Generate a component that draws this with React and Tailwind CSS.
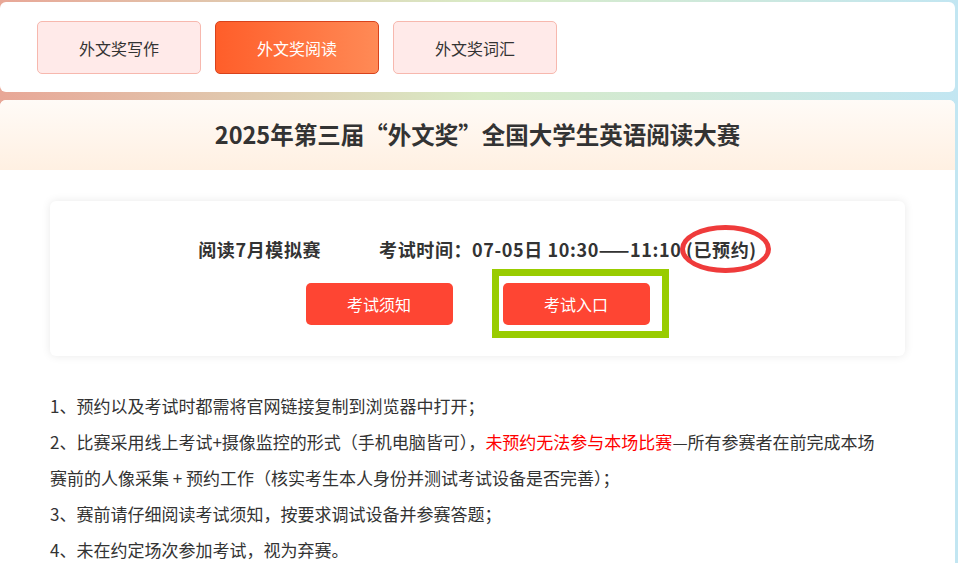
import React from "react";

const font = { fontFamily: '"Noto Sans CJK SC", "Noto Sans", sans-serif' };

function Tab({ children, active }) {
  if (active) {
    return (
      <div className="flex h-[53px] w-[164px] items-center justify-center rounded-[5px] border border-[#d8421c] bg-[linear-gradient(90deg,#ff5e2a_0%,#ff8a56_100%)] text-[16px] text-white">
        {children}
      </div>
    );
  }
  return (
    <div className="flex h-[53px] w-[164px] items-center justify-center rounded-[5px] border border-[#f7b8ae] bg-[#ffeae9] text-[16px] text-[#333]">
      {children}
    </div>
  );
}

export default function App() {
  return (
    <div
      style={font}
      className="min-h-[563px] w-[958px] overflow-hidden bg-[linear-gradient(90deg,#e8a797_0%,#d9ebc6_50%,#c2e6f2_100%)] pt-[2px] pr-[3px]"
    >
      {/* top tabs card */}
      <div className="flex h-[90px] gap-[14px] rounded-[6px] bg-white px-[37px] pt-[19px]">
        <Tab>外文奖写作</Tab>
        <Tab active>外文奖阅读</Tab>
        <Tab>外文奖词汇</Tab>
      </div>

      {/* main card */}
      <div className="mt-[8px] min-h-[463px] rounded-t-[6px] bg-white">
        <div className="flex h-[70px] items-center justify-center rounded-t-[6px] bg-[linear-gradient(180deg,#fffbf7_0%,#fff0e2_100%)]">
          <h1 className="text-[23.5px] font-bold text-[#333]">
            2025年第三届“外文奖”全国大学生英语阅读大赛
          </h1>
        </div>

        <div className="mx-[50px] mt-[31px] h-[155px] rounded-[6px] bg-white pt-[35px] shadow-[0_0_10px_rgba(0,0,0,0.09)]">
          <div className="flex justify-center gap-[58px] text-[18px] leading-[27px] font-bold tracking-[0.6px] text-[#333]">
            <span>阅读7月模拟赛</span>
            <span>
              考试时间：07-05日 10:30——11:10{" "}
              <span className="relative">
                (已预约)
                <span className="absolute -left-[6px] -right-[14px] -top-[11px] -bottom-[11px] rounded-[50%] border-[5px] border-[#ef3b3b]"></span>
              </span>
            </span>
          </div>
          <div className="mt-[20px] flex justify-center gap-[50px]">
            <button className="flex h-[42px] w-[147px] items-center justify-center rounded-[5px] bg-[#fe4533] text-[16px] text-white">
              考试须知
            </button>
            <div className="relative">
              <button className="flex h-[42px] w-[147px] items-center justify-center rounded-[5px] bg-[#fe4533] text-[16px] text-white">
                考试入口
              </button>
              <span className="absolute -left-[11px] -right-[19px] -top-[14px] -bottom-[13px] border-[7px] border-[#99cc00]"></span>
            </div>
          </div>
        </div>

        <div className="mt-[32px] pl-[50px] pr-[64px] text-[17px] leading-[36px] text-[#333]">
          <p>1、预约以及考试时都需将官网链接复制到浏览器中打开；</p>
          <p>
            2、比赛采用线上考试+摄像监控的形式（手机电脑皆可），
            <span className="text-[#ff0000]">未预约无法参与本场比赛</span>
            —所有参赛者在前完成本场赛前的人像采集 + 预约工作（核实考生本人身份并测试考试设备是否完善）；
          </p>
          <p>3、赛前请仔细阅读考试须知，按要求调试设备并参赛答题；</p>
          <p>4、未在约定场次参加考试，视为弃赛。</p>
        </div>
      </div>
    </div>
  );
}
